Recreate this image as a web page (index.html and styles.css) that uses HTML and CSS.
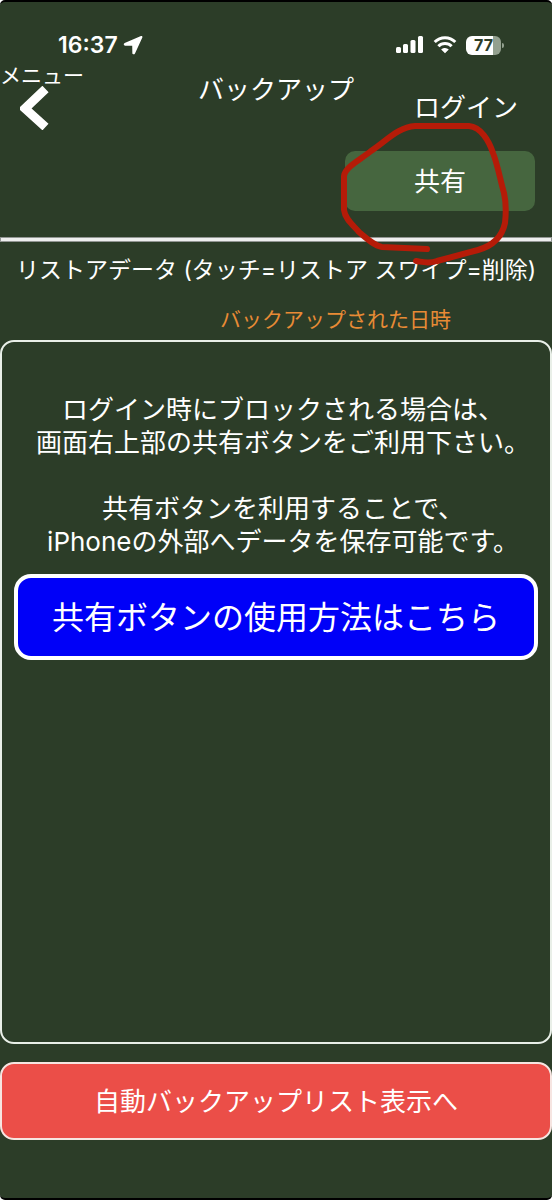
FILE: index.html
```html
<!DOCTYPE html>
<html lang="ja">
<head>
<meta charset="utf-8">
<meta name="viewport" content="width=device-width, initial-scale=1">
<title>バックアップ</title>
<link rel="stylesheet" href="styles.css">
</head>
<body>
<div class="screen">
  <div class="status">
    <div class="status-left">
      <span class="time">16:37</span>
      <svg class="location" viewBox="0 0 18 18" aria-hidden="true"><path d="M16.200 1 1.500 7.300c-1.300.6-1 2.300.4 2.300l6.400.1.100 6.400c0 1.500 1.800 1.800 2.400.5L17.400 2.300c.4-.9-.3-1.600-1.200-1.300z"/></svg>
    </div>
    <div class="status-right">
      <svg class="signal" viewBox="0 0 28 18" aria-hidden="true"><rect x="0" y="11" width="5" height="6" rx="1.500"/><rect x="7" y="8" width="5" height="9" rx="1.500"/><rect x="14.500" y="4" width="5" height="13" rx="1.500"/><rect x="22" y="0" width="5" height="17" rx="1.500"/></svg>
      <svg class="wifi" viewBox="0 0 24 18" aria-hidden="true"><path class="arc" d="M1.700 6a14.500 14.500 0 0 1 20.600 0M5.400 10.200a9.200 9.200 0 0 1 13.200 0"/><path d="M12 12c-1.500 0-2.800.5-3.800 1.500l3.800 3.800 3.800-3.800a5.400 5.400 0 0 0-3.800-1.500z"/></svg>
      <div class="battery"><span class="battery-level">77</span></div>
    </div>
  </div>

  <header class="header">
    <button class="menu" type="button">
      <span>メニュー</span>
      <svg class="chevron" viewBox="0 0 30 44" aria-hidden="true"><path d="M25.500 3 5 22.500 25.500 41"/></svg>
    </button>
    <h1 class="title">バックアップ</h1>
    <button class="login" type="button">ログイン</button>
  </header>
  <div class="share-row">
    <button class="share" type="button">共有</button>
    <svg class="marker" viewBox="0 0 174 146" aria-hidden="true"><path d="M88 127 43 125C36 124 28 117 20 110C14 103 6 97 5 88V54C6 45 21 38 32 29C48 18 60 5 76 4H130C142 5 150 19 154 31C159 44 161 57 165 71C167 80 167 92 166 101C163 115 153 124 139 128L98 139C89 142 84 140 77 139"/></svg>
  </div>
  <hr class="rule">

  <main class="main">
    <h2 class="list-title">リストアデータ (タッチ=リストア スワイプ=削除)</h2>
    <p class="date-label">バックアップされた日時</p>
    <section class="panel">
      <div class="note">
        <p>ログイン時にブロックされる場合は、<br>画面右上部の共有ボタンをご利用下さい。</p>
        <p>共有ボタンを利用することで、<br>iPhoneの外部へデータを保存可能です。</p>
      </div>
      <button class="howto" type="button">共有ボタンの使用方法はこちら</button>
    </section>
    <button class="auto" type="button">自動バックアップリスト表示へ</button>
  </main>
</div>
</body>
</html>
```
FILE: styles.css
```css
* { box-sizing: border-box; }
html { background: #fff; }
body {
  margin: 0;
  color: #fff;
  font-family: Inter, "Noto Sans CJK JP", sans-serif;
  font-weight: 400;
}
h1, h2, p { margin: 0; font-weight: inherit; }
button {
  margin: 0;
  padding: 0;
  border: 0;
  background: none;
  color: inherit;
  font: inherit;
  cursor: pointer;
}
.screen {
  display: flex;
  flex-direction: column;
  min-height: 100vh;
  overflow: hidden;
  border-top: 2px solid #000;
  border-bottom: 2px solid #000;
  border-radius: 5px;
  background: #2c3d28;
}
.status {
  display: flex;
  justify-content: space-between;
  padding: 31px 51px 0 58px;
}
.status-left, .status-right { display: flex; align-items: center; height: 24px; }
.status svg { fill: #fff; }
.status-left { gap: 5px; }
.time {
  font-size: 23px;
  font-weight: 600;
  line-height: 24px;
}
.location { width: 20px; height: 20px; }
.status-right { gap: 9px; }
.signal { width: 28px; height: 18px; }
.wifi { width: 24px; height: 18px; }
.wifi .arc { fill: none; stroke: #fff; stroke-width: 3; }
.battery {
  position: relative;
  width: 35px;
  height: 19px;
  border-radius: 6px;
  background: linear-gradient(90deg, #fff 77%, #93a08f 77%);
}
.battery::after {
  content: "";
  position: absolute;
  top: 7px;
  right: -3px;
  width: 2px;
  height: 5px;
  border-radius: 0 2px 2px 0;
  background: #93a08f;
}
.battery-level {
  display: block;
  color: #2c3d28;
  font-size: 16px;
  font-weight: 700;
  line-height: 19px;
  text-align: center;
}
.header {
  display: grid;
  grid-template-columns: 1fr auto 1fr;
  align-items: start;
  padding-top: 9px;
}
.menu {
  justify-self: start;
  display: flex;
  flex-direction: column;
  align-items: flex-start;
  font-size: 21px;
  line-height: 20px;
}
.chevron { width: 30px; height: 44px; margin-left: 20px; }
.chevron path { fill: none; stroke: #fff; stroke-width: 9; }
.title { padding-top: 9px; font-size: 26px; line-height: 30px; }
.login {
  justify-self: end;
  margin: 27px 34px 0 0;
  font-size: 26px;
  line-height: 30px;
}
.share-row {
  position: relative;
  display: flex;
  justify-content: flex-end;
  padding: 21px 17px 26px;
}
.share {
  width: 190px;
  height: 60px;
  padding-bottom: 3px;
  border-radius: 10px;
  background: #46663f;
  font-size: 26px;
}
.marker {
  position: absolute;
  z-index: 1;
  top: -8px;
  right: 39px;
  width: 174px;
  height: 146px;
  pointer-events: none;
}
.marker path {
  fill: none;
  stroke: #b51b08;
  stroke-width: 6;
  stroke-linecap: round;
  stroke-linejoin: round;
}
.rule {
  width: 100%;
  height: 5px;
  margin: 0;
  border: 1px solid #929693;
  background: #eee;
}
.main { display: flex; flex: 1; flex-direction: column; }
.list-title {
  padding-top: 12px;
  font-size: 23px;
  line-height: 32px;
  text-align: center;
}
.date-label {
  padding: 19px 0 5px 119px;
  color: #e88b35;
  font-size: 21px;
  line-height: 30px;
  text-align: center;
}
.panel {
  flex: 1;
  padding: 51px 12px 32px;
  border: 2px solid #e9efe8;
  border-radius: 14px;
}
.note {
  display: grid;
  gap: 33px;
  padding-left: 14px;
  font-size: 26px;
  line-height: 33px;
  text-align: center;
}
.howto {
  width: 100%;
  margin-top: 16px;
  padding: 17px 0 15px;
  border: 4px solid #fff;
  border-radius: 17px;
  background: #0000f8;
  font-size: 32px;
  line-height: 46px;
}
.auto {
  width: 100%;
  margin: 18px 0 58px;
  padding: 17px 0 15px;
  border: 2px solid #f6e5e1;
  border-radius: 14px;
  background: #eb4e48;
  font-size: 26px;
  line-height: 42px;
}
```
